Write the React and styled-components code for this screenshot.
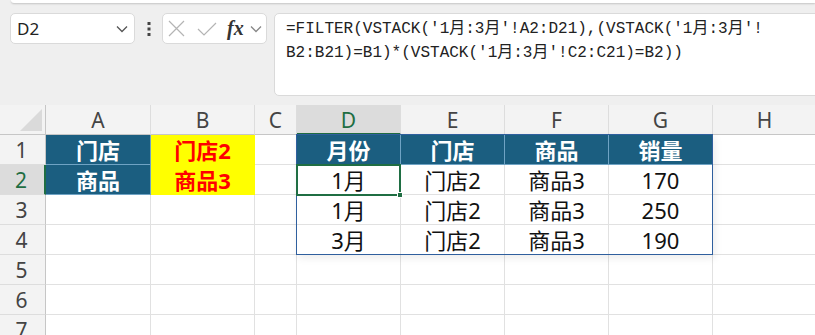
import React from 'react';
import styled, { createGlobalStyle } from 'styled-components';

const GlobalStyle = createGlobalStyle`
  html, body {
    margin: 0;
    padding: 0;
    background: #efefef;
    overflow: hidden;
  }
`;

const Page = styled.div`
  width: 815px;
  height: 335px;
  overflow: hidden;
  background: #efefef;
`;

const RibbonEdge = styled.div`
  height: 3px;
  margin-left: 11px;
  background: #fff;
  border-radius: 0 0 0 6px;
  box-shadow: 0 1px 2px rgba(0, 0, 0, 0.18);
`;

const Bar = styled.div`
  display: flex;
  align-items: flex-start;
  padding: 10px 0 0 10px;
  height: 92px;
  box-sizing: border-box;
`;

const NameBox = styled.div`
  width: 125px;
  height: 31px;
  box-sizing: border-box;
  background: #fff;
  border: 1px solid #dadada;
  border-radius: 5px;
  display: flex;
  align-items: center;
  justify-content: space-between;
  padding: 0 6px 0 6px;
  font-family: 'Noto Sans', 'Liberation Sans', sans-serif;
  font-size: 17px;
  color: #222;
`;

const Dots = styled.div`
  width: 27px;
  height: 31px;
  display: flex;
  align-items: center;
  justify-content: center;
`;

const FxBox = styled.div`
  width: 105px;
  height: 31px;
  box-sizing: border-box;
  background: #fff;
  border: 1px solid #dadada;
  border-radius: 5px;
  display: flex;
  align-items: center;
  padding: 0 0 0 5px;
  gap: 12px;
`;

const Fx = styled.span`
  font-family: 'Liberation Serif', 'DejaVu Serif', serif;
  font-style: italic;
  font-weight: bold;
  font-size: 20px;
  color: #333;
  margin-left: -2px;
  margin-right: -6px;
`;

const FormulaBox = styled.div`
  flex: 1;
  margin-left: 7px;
  margin-right: -12px;
  height: 83px;
  box-sizing: border-box;
  background: #fff;
  border: 1px solid #dadada;
  border-radius: 5px;
  padding: 3px 0 0 11px;
  font-family: 'Liberation Mono', 'Noto Sans CJK SC', monospace;
  font-size: 16px;
  line-height: 24px;
  color: #222;
  white-space: pre;
`;

const Sheet = styled.div`
  display: grid;
  grid-template-columns: 46px 105px 104px 42px 104px 104px 104px 104px 104px;
  grid-auto-rows: 30px;
  margin-top: 10px;
`;

const Corner = styled.div`
  grid-row: 1;
  grid-column: 1;
  background: #f3f3f3;
  border-bottom: 1px solid #c6c6c6;
  border-right: 1px solid #c6c6c6;
  box-sizing: border-box;
  display: flex;
  align-items: flex-end;
  justify-content: flex-end;
  padding: 0 3px 3px 0;
`;

const ColHead = styled.div`
  grid-row: 1;
  grid-column: ${p => p.$col};
  background: ${p => (p.$active ? '#dcdcdc' : '#f3f3f3')};
  border-bottom: ${p => (p.$active ? '2px solid #1f6e43' : '1px solid #c6c6c6')};
  border-right: 1px solid #dddddd;
  box-sizing: border-box;
  display: flex;
  align-items: center;
  justify-content: center;
  font-family: 'Noto Sans', 'Liberation Sans', sans-serif;
  font-size: 21px;
  color: ${p => (p.$active ? '#1f6e43' : '#444')};
  padding-top: ${p => (p.$active ? '1px' : '0')};
`;

const RowHead = styled.div`
  grid-row: ${p => p.$row};
  grid-column: 1;
  background: ${p => (p.$active ? '#dcdcdc' : '#f3f3f3')};
  border-right: ${p => (p.$active ? '2px solid #1f6e43' : '1px solid #c6c6c6')};
  border-bottom: 1px solid #dddddd;
  box-sizing: border-box;
  display: flex;
  align-items: center;
  justify-content: center;
  padding-right: 2px;
  font-family: 'Noto Sans', 'Liberation Sans', sans-serif;
  font-size: 21px;
  color: ${p => (p.$active ? '#1f6e43' : '#444')};
`;

const fills = {
  head: { bg: '#1b5e80', fg: '#fff', weight: 'bold', line: '#6fa3c4' },
  key: { bg: '#ffff00', fg: '#ff0000', weight: 'bold', line: '#ffff00' },
  plain: { bg: '#fff', fg: '#111', weight: 'normal', line: '#e1e1e1' },
};

const Cell = styled.div`
  grid-row: ${p => p.$row};
  grid-column: ${p => p.$col};
  background: ${p => fills[p.$kind].bg};
  color: ${p => fills[p.$kind].fg};
  font-weight: ${p => fills[p.$kind].weight};
  border-right: 1px solid ${p => fills[p.$kind].line};
  border-bottom: 1px solid ${p => fills[p.$kind].line};
  box-sizing: border-box;
  display: flex;
  align-items: center;
  justify-content: center;
  font-family: 'Noto Sans', 'Noto Sans CJK SC', sans-serif;
  font-size: 22px;
  line-height: 1;
  white-space: nowrap;
  overflow: hidden;
`;

const SpillFrame = styled.div`
  grid-column: 5 / 9;
  grid-row: 2 / 6;
  border: 1px solid #2f5f9e;
  margin: -1px 0 0 -1px;
  box-shadow: 2px 3px 8px rgba(0, 0, 0, 0.08);
  pointer-events: none;
  z-index: 1;
`;

const Selection = styled.div`
  grid-column: 5 / 6;
  grid-row: 3 / 4;
  border: 2px solid #1f6e43;
  margin: -1px 0 -1px -1px;
  position: relative;
  pointer-events: none;
  z-index: 2;
`;

const FillHandle = styled.span`
  position: absolute;
  right: -4px;
  bottom: -4px;
  width: 6px;
  height: 6px;
  background: #1f6e43;
  border: 1px solid #fff;
  box-sizing: border-box;
`;

const Chevron = ({ color = '#555' }) => (
  <svg width="12" height="8" viewBox="0 0 12 8">
    <path d="M1 1.5 L6 6.5 L11 1.5" fill="none" stroke={color} strokeWidth="1.3" />
  </svg>
);

const cols = ['A', 'B', 'C', 'D', 'E', 'F', 'G', 'H'];

const rows = [
  [['门店', 'head'], ['门店2', 'key'], null, ['月份', 'head'], ['门店', 'head'], ['商品', 'head'], ['销量', 'head'], null],
  [['商品', 'head'], ['商品3', 'key'], null, ['1月'], ['门店2'], ['商品3'], ['170'], null],
  [null, null, null, ['1月'], ['门店2'], ['商品3'], ['250'], null],
  [null, null, null, ['3月'], ['门店2'], ['商品3'], ['190'], null],
  [null, null, null, null, null, null, null, null],
  [null, null, null, null, null, null, null, null],
  [null, null, null, null, null, null, null, null],
];

export default function App() {
  return (
    <Page>
      <GlobalStyle />
      <RibbonEdge />
      <Bar>
        <NameBox>
          <span>D2</span>
          <Chevron />
        </NameBox>
        <Dots>
          <svg width="4" height="16" viewBox="0 0 4 16">
            <rect x="0.5" y="1" width="3" height="3" fill="#444" />
            <rect x="0.5" y="6.5" width="3" height="3" fill="#444" />
            <rect x="0.5" y="12" width="3" height="3" fill="#444" />
          </svg>
        </Dots>
        <FxBox>
          <svg width="17" height="17" viewBox="0 0 17 17">
            <path d="M1 1 L16 16 M16 1 L1 16" stroke="#b4b4b4" strokeWidth="1.2" fill="none" />
          </svg>
          <svg width="20" height="16" viewBox="0 0 20 16">
            <path d="M1 8 L7 14 L19 2" stroke="#b4b4b4" strokeWidth="1.2" fill="none" />
          </svg>
          <Fx>fx</Fx>
          <Chevron color="#888" />
        </FxBox>
        <FormulaBox>
          {"=FILTER(VSTACK('1月:3月'!A2:D21),(VSTACK('1月:3月'!\nB2:B21)=B1)*(VSTACK('1月:3月'!C2:C21)=B2))"}
        </FormulaBox>
      </Bar>
      <Sheet>
        <Corner>
          <svg width="22" height="22" viewBox="0 0 22 22">
            <path d="M22 0 L22 22 L0 22 Z" fill="#dadada" />
          </svg>
        </Corner>
        {cols.map((c, i) => (
          <ColHead key={c} $col={i + 2} $active={c === 'D'}>{c}</ColHead>
        ))}
        {rows.map((row, r) => (
          <React.Fragment key={r}>
            <RowHead $row={r + 2} $active={r === 1}>{r + 1}</RowHead>
            {row.map((cell, c) => (
              <Cell key={c} $row={r + 2} $col={c + 2} $kind={cell ? cell[1] || 'plain' : 'plain'}>
                {cell ? cell[0] : ''}
              </Cell>
            ))}
          </React.Fragment>
        ))}
        <SpillFrame />
        <Selection>
          <FillHandle />
        </Selection>
      </Sheet>
    </Page>
  );
}
